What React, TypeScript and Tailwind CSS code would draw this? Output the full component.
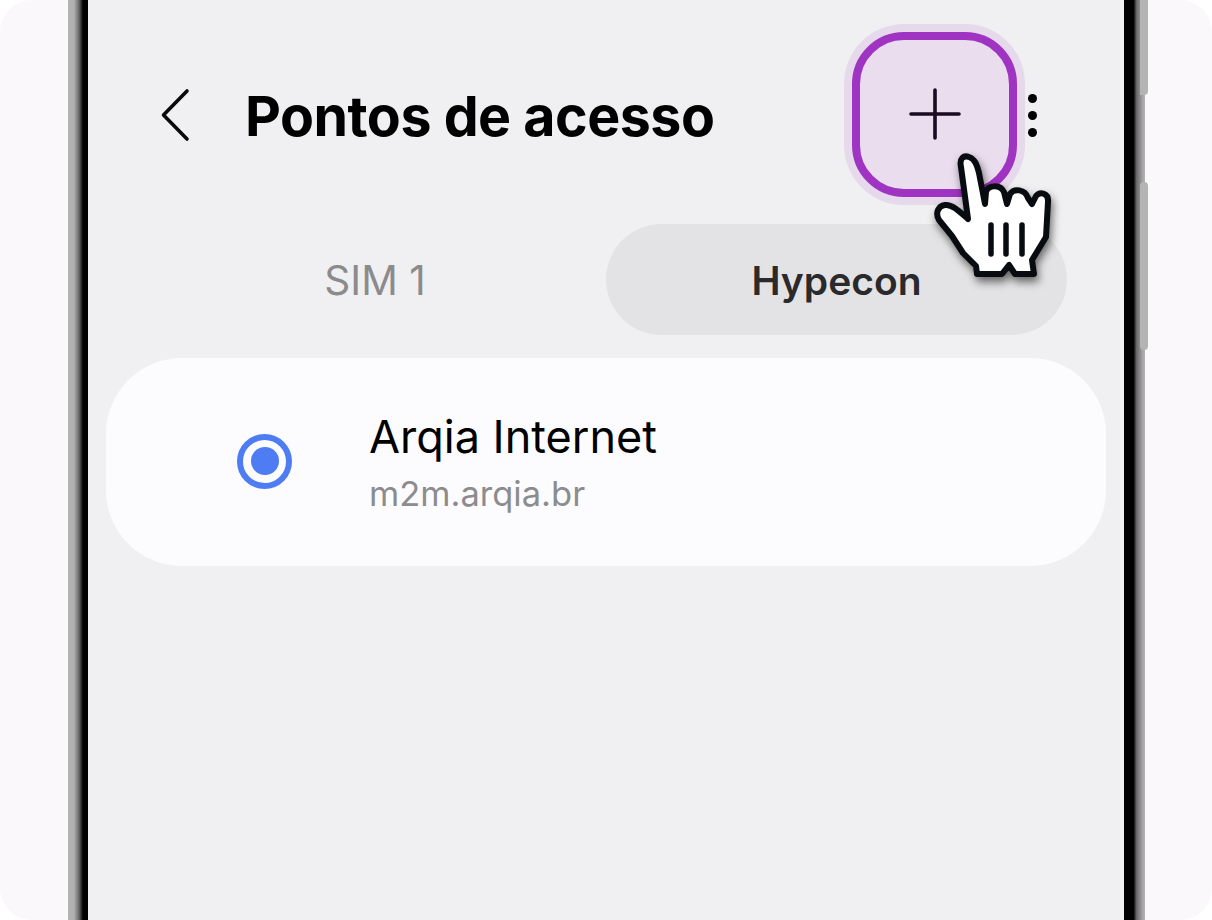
export default function App() {
  return (
    <div className="w-[1212px] h-[920px] bg-white overflow-hidden" style={{ fontFamily: 'Inter, "Liberation Sans", sans-serif' }}>
      <div className="relative h-full rounded-[32px] bg-[#faf8fa] pl-[68px] pr-[67px] overflow-hidden">
        <div className="flex h-full">
          <div className="w-[20px] shrink-0 bg-[linear-gradient(to_right,#b4b4b4_0%,#b0b0b0_30%,#6a6a6a_55%,#000000_75%,#000000_100%)]" />
          <div className="flex-1 min-w-0 bg-[#f0f0f2] flex flex-col">
            {/* Header */}
            <div className="flex items-center h-[172px] pt-[58px] pl-[72px] shrink-0 relative">
              <svg width="32" height="54" viewBox="0 0 32 54" fill="none" className="shrink-0">
                <path d="M27 3 L3.5 27 L27 51" stroke="#0a0a0a" strokeWidth="3.6" strokeLinecap="round" strokeLinejoin="round" />
              </svg>
              <h1 className="ml-[53px] mt-[2px] text-[55.5px] font-bold text-black tracking-[-0.5px] leading-none">Pontos de acesso</h1>
              <div className="ml-auto mr-[107px] flex items-center">
                <div className="w-[165px] h-[165px] mt-[-2px] rounded-[52px] border-[8px] border-[#a034c2] bg-[#e9ddee] ring-8 ring-[#e7d9ec] flex items-center justify-center">
                  <svg width="54" height="54" viewBox="0 0 54 54" fill="none">
                    <path d="M27 3 V51 M3 27 H51" stroke="#1a0a22" strokeWidth="3.6" strokeLinecap="round" />
                  </svg>
                </div>
              </div>
              <div className="absolute right-[87px] top-[94px] flex flex-col gap-[8px]">
                <div className="w-[9px] h-[9px] rounded-full bg-black" />
                <div className="w-[9px] h-[9px] rounded-full bg-black" />
                <div className="w-[9px] h-[9px] rounded-full bg-black" />
              </div>
            </div>
            {/* Tabs */}
            <div className="flex mt-[52px] pl-[56px] pr-[57px] h-[111px] shrink-0">
              <div className="w-[462px] pt-[4px] flex items-center justify-center text-[40.5px] text-[#8b8b8d]">SIM 1</div>
              <div className="flex-1 pt-[3px] rounded-[56px] bg-[#e3e3e5] flex items-center justify-center text-[39px] font-semibold text-[#2a2a2c]">Hypecon</div>
            </div>
            {/* Card */}
            <div className="mt-[23px] ml-[18px] mr-[18px] h-[208px] rounded-[76px] bg-[#fcfcfe] flex items-center shrink-0">
              <div className="ml-[131px] mb-[2px] w-[55px] h-[55px] rounded-full border-[6px] border-[#4d7cf3] flex items-center justify-center bg-[#fcfcfe]">
                <div className="w-[28px] h-[28px] rounded-full bg-[#4d7cf3]" />
              </div>
              <div className="ml-[77px] pt-[4px] flex flex-col">
                <div className="text-[45px] leading-[60px] text-black">Arqia Internet</div>
                <div className="text-[34.5px] leading-[54px] text-[#8c8c8e]">m2m.arqia.br</div>
              </div>
            </div>
          </div>
          <div className="w-[21px] shrink-0 bg-[linear-gradient(to_left,#b4b4b4_0%,#a8a8a8_10%,#6a6a6a_40%,#000000_55%,#000000_100%)]" />
        </div>
        {/* Side buttons */}
        <div className="absolute left-[1140px] top-0 w-[8px] h-[95px] rounded-br-[4px] bg-[#b4b4b4]" />
        <div className="absolute left-[1140px] top-[182px] w-[8px] h-[168px] rounded-[4px] bg-[#b4b4b4]" />
        {/* Hand cursor */}
        <svg
          width="150"
          height="150"
          viewBox="0 0 150 150"
          className="absolute left-[920px] top-[140px] drop-shadow-[2px_5px_4px_rgba(0,0,0,0.55)]"
          fill="none"
        >
          <path
            d="M48 79 L41 27 C39 18 44 15 49 17 C55 19 57 25 59 33 L65 64 L66 52 C68 45 80 44 84 52 L87 64 L90 54 C94 48 105 49 108 58 L112 64 L116 56 C120 51 129 53 128 62 L126 97 L112 120 L114 134 L95 134 L89 125 L82 134 L57 134 L56 126 L43 113 L32 96 L19 80 C15 73 18 66 25 65 C32 64 39 71 48 79 Z"
            fill="#ffffff"
            stroke="#080b10"
            strokeWidth="6"
            strokeLinejoin="round"
          />
          <path d="M71 85 V114 M86 85 V114 M102 85 V114" stroke="#080b10" strokeWidth="5.5" strokeLinecap="round" />
        </svg>
      </div>
    </div>
  );
}
